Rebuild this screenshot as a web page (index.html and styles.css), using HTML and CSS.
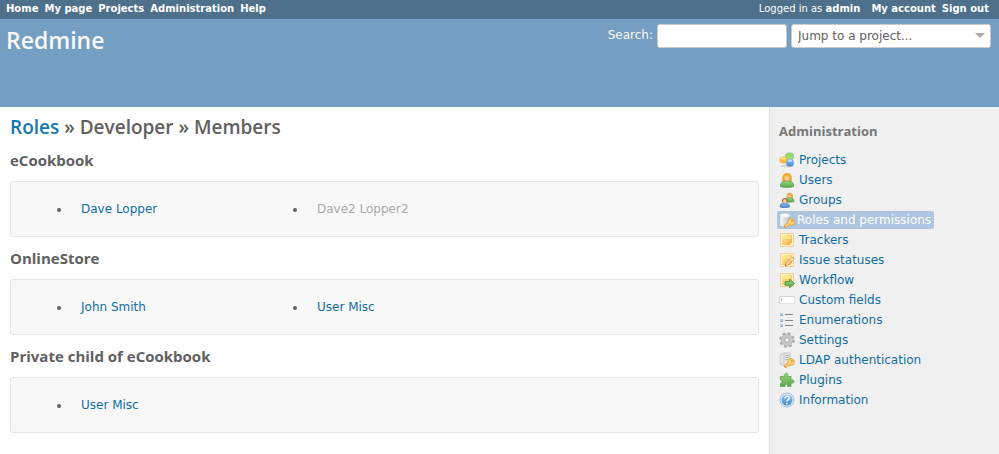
FILE: index.html
```html
<!DOCTYPE html>
<html lang="en">
<head>
<meta charset="utf-8">
<title>Members - Redmine</title>
<link rel="stylesheet" href="styles.css">
</head>
<body>
<svg class="defs" aria-hidden="true">
  <defs>
    <linearGradient id="gold" x1="0" y1="0" x2="1" y2="1"><stop offset="0" stop-color="#fff0ac"/><stop offset="1" stop-color="#f0aa38"/></linearGradient>
    <linearGradient id="green" x1="0" y1="0" x2="0" y2="1"><stop offset="0" stop-color="#9bd77c"/><stop offset="1" stop-color="#55a64b"/></linearGradient>
    <linearGradient id="blue" x1="0" y1="0" x2="0" y2="1"><stop offset="0" stop-color="#8fc4f2"/><stop offset="1" stop-color="#4388ce"/></linearGradient>
    <linearGradient id="grey" x1="0" y1="0" x2="1" y2="0"><stop offset="0" stop-color="#fafafa"/><stop offset="1" stop-color="#b8b8b8"/></linearGradient>
    <g id="note"><path d="M1.500 1.500h13v13h-13z" fill="#fff3ca" stroke="#f3cf94"/><path d="M3 3h10v7.500L10.500 13H3z" fill="url(#gold)"/><path d="M4 4h8v3H4z" fill="#ffe68a"/><path d="M10 13v-2.500h3z" fill="#fff1c4" stroke="#e2a850" stroke-width=".6"/></g>
    <g id="key"><path d="M10.800 10.500 6.500 14.300" stroke="#d99436" stroke-width="3" stroke-linecap="round"/><circle cx="12" cy="10" r="3.400" fill="#ffd46c" stroke="#dc9c3c" stroke-width=".8"/><path d="M11.500 10 6.600 14.300" stroke="#ffd777" stroke-width="1.600"/><circle cx="13" cy="9" r=".8" fill="#b57b32"/></g>
    <g id="person"><path d="M1.500 14.500c-.4-4 2-5.500 6.500-5.500s6.900 1.500 6.500 5.500c-3 1.200-10 1.200-13 0z"/><circle cx="8" cy="6.300" r="2.700" fill="#fbd1a0" stroke="#d08c4c" stroke-width=".5"/></g>
  </defs>
</svg>

<nav class="top-menu" aria-label="Top">
  <ul class="menu">
    <li><a href="#">Home</a></li>
    <li><a href="#">My page</a></li>
    <li><a href="#">Projects</a></li>
    <li><a href="#">Administration</a></li>
    <li><a href="#">Help</a></li>
  </ul>
  <div class="account">
    <span class="logged-as">Logged in as <a href="#">admin</a></span>
    <ul class="menu">
      <li><a href="#">My account</a></li>
      <li><a href="#">Sign out</a></li>
    </ul>
  </div>
</nav>

<header class="header">
  <h1>Redmine</h1>
  <form class="quick-search">
    <label for="q">Search:</label>
    <input id="q" name="q" type="text">
    <span class="jump">
      <select aria-label="Jump to a project"><option>Jump to a project...</option></select>
    </span>
  </form>
</header>

<div class="main">
  <main class="content">
    <h2><a href="#">Roles</a> » Developer » Members</h2>

    <h3>eCookbook</h3>
    <div class="box">
      <ul class="members">
        <li><a href="#">Dave Lopper</a></li>
        <li><a class="locked" href="#">Dave2 Lopper2</a></li>
      </ul>
    </div>

    <h3>OnlineStore</h3>
    <div class="box">
      <ul class="members">
        <li><a href="#">John Smith</a></li>
        <li><a href="#">User Misc</a></li>
      </ul>
    </div>

    <h3>Private child of eCookbook</h3>
    <div class="box">
      <ul class="members">
        <li><a href="#">User Misc</a></li>
      </ul>
    </div>
  </main>

  <aside class="sidebar">
    <h3>Administration</h3>
    <ul class="admin-menu">
      <li><a href="#"><svg viewBox="0 0 16 16"><ellipse cx="8" cy="14" rx="7" ry="1.500" fill="#d5d5d5"/><rect x="6.500" y="1" width="8" height="7" rx="3" fill="#9bdc70" stroke="#76bd55" stroke-width=".6"/><ellipse cx="4.500" cy="8" rx="4.200" ry="3.500" fill="#f6b743"/><ellipse cx="4.500" cy="6.500" rx="2.800" ry="1.300" fill="#ffdd83"/><circle cx="11" cy="10.700" r="3.900" fill="url(#blue)"/><ellipse cx="11" cy="8.800" rx="2.300" ry="1.200" fill="#b8dcfa"/></svg>Projects</a></li>
      <li><a href="#"><svg viewBox="0 0 16 16"><path d="M3.500 9.500c-1-4 0-8.500 4.500-8.500s5.500 4.500 4.500 8.500z" fill="#f0a52e"/><use href="#person" fill="url(#green)" stroke="#559447" stroke-width=".7"/><path d="M4.500 6C5 2 11 2 11.500 6L8 4.500z" fill="#ffc34a"/></svg>Users</a></li>
      <li><a href="#"><svg viewBox="0 0 16 16"><g transform="translate(5.500 0) scale(.66)"><path d="M3.500 9.500c-1-4 0-8.500 4.500-8.500s5.500 4.500 4.500 8.500z" fill="#f0a52e"/><use href="#person" fill="url(#green)" stroke="#559447"/></g><g transform="translate(0 4.500) scale(.72)"><path d="M4 8c-1-8 9-8 8 0z" fill="#965d3b"/><use href="#person" fill="url(#blue)" stroke="#427aaf"/></g></svg>Groups</a></li>
      <li><a class="selected" href="#"><svg viewBox="0 0 16 16"><path d="M1 3.500c0-3 10-3 10 0v9c0 3-10 3-10 0z" fill="url(#grey)" stroke="#c4c4c4" stroke-width=".6"/><ellipse cx="6" cy="3.500" rx="4.700" ry="2" fill="#fafafa" stroke="#d4d4d4" stroke-width=".5"/><use href="#key"/></svg>Roles and permissions</a></li>
      <li><a href="#"><svg viewBox="0 0 16 16"><use href="#note"/></svg>Trackers</a></li>
      <li><a href="#"><svg viewBox="0 0 16 16"><use href="#note"/><path d="m6 14 1-3.500 6-5.700 2.200 2.200-6 5.800z" fill="#f9c88a" stroke="#c98f58" stroke-width=".7"/><path d="m12 5.900 2 2" stroke="#fff1d5" stroke-width="1.200"/><path d="m6 14 .5-1.500 1 1z" fill="#6c5848"/></svg>Issue statuses</a></li>
      <li><a href="#"><svg viewBox="0 0 16 16"><use href="#note"/><path d="M6 9.500h4.500V7l5 4.500-5 4.300v-2.500H6z" fill="url(#green)" stroke="#3f8d3b" stroke-width=".8"/></svg>Workflow</a></li>
      <li><a href="#"><svg viewBox="0 0 16 16"><path d="M.5 4.500h15v7H.5z" fill="#fff" stroke="#e4e4e4"/><path d="M.5 11.500v-7h15" fill="none" stroke="#d4d4d4"/><path d="M2.500 6v3.500" stroke="#b9b9b9"/></svg>Custom fields</a></li>
      <li><a href="#"><svg viewBox="0 0 16 16"><path d="M1 1h3v3H1zM1 7h3v3H1zM1 12h3v3H1z" fill="#a5cbed"/><path d="M2 3h2v1H2zM2 9h2v1H2zM2 14h2v1H2z" fill="#7fabd5"/><path d="M6 2.500h8M6 8.500h8M6 13.500h8" stroke="#858585" stroke-width="1.200"/></svg>Enumerations</a></li>
      <li><a href="#"><svg viewBox="0 0 16 16"><circle cx="8" cy="8" r="6.300" fill="none" stroke="#a7a7a7" stroke-width="3" stroke-dasharray="2.600 2.348"/><circle cx="8" cy="8" r="4.300" fill="none" stroke="#c7c7c7" stroke-width="3.600"/><circle cx="8" cy="8" r="5.700" fill="none" stroke="#acacac" stroke-width=".6"/><circle cx="8" cy="8" r="2.300" fill="#f0f0f0" stroke="#9a9a9a" stroke-width=".8"/></svg>Settings</a></li>
      <li><a href="#"><svg viewBox="0 0 16 16"><path d="M1 3 5 1h6v13H5l-4-2z" fill="#e6e6e6" stroke="#b5b5b5" stroke-width=".7"/><path d="M5 1v13" stroke="#cacaca"/><path d="M6.500 3.500h3M6.500 5.500h3M6.500 7.500h3" stroke="#a0a0a0" stroke-width=".8"/><use href="#key"/></svg>LDAP authentication</a></li>
      <li><a href="#"><svg viewBox="0 0 16 16"><path d="M1 4.500h4.500C4 1 9.500 0 9 3.300l-.4 1.200H12v3.600c3.500-1.700 4.500 4.200 0 2.800v3.600H8.600c1-3-3.400-3-2.600 0H1.500v-3.300c2 .5 2-3.700 0-3.200z" fill="url(#green)" stroke="#5fa657" stroke-width=".8"/></svg>Plugins</a></li>
      <li><a href="#"><svg viewBox="0 0 16 16"><circle cx="8" cy="8" r="7" fill="#e3effa" stroke="#8eafd0" stroke-width=".8"/><circle cx="8" cy="8" r="5.500" fill="url(#blue)"/><path d="M5.900 6.500c0-3.200 4.600-2.800 4.400-.2C10.200 7.800 8 7.800 8 9.500" fill="none" stroke="#fff" stroke-width="1.400"/><circle cx="8" cy="11.700" r=".9" fill="#fff"/></svg>Information</a></li>
    </ul>
  </aside>
</div>
</body>
</html>
```
FILE: styles.css
```css
* { box-sizing: border-box; }

body {
  display: flex;
  flex-direction: column;
  min-height: 100vh;
  margin: 0;
  background: #fff;
  color: #606060;
  font: 12px/16px "DejaVu Sans", Verdana, sans-serif;
}

a { color: #116da1; text-decoration: none; }
a:hover { text-decoration: underline; }
ul { margin: 0; padding: 0; }

h1, h2, h3 {
  margin: 0;
  font-family: "Open Sans", "Trebuchet MS", sans-serif;
}

.defs { position: absolute; width: 0; height: 0; }

/* Top bar */
.top-menu {
  display: flex;
  justify-content: space-between;
  padding: 0 10px 0 6px;
  background: #4e708b;
  color: #fff;
  font-size: 10px;
  line-height: 18px;
  border-bottom: 1px solid #4e708b;
}
.top-menu a { color: #fff; font-weight: bold; }
.menu { display: flex; gap: 6px; list-style: none; }
.account { display: flex; gap: 11px; }

/* Header */
.header {
  display: flex;
  justify-content: space-between;
  align-items: flex-start;
  min-height: 88px;
  padding: 5px 8px 0 6px;
  background: #749ec2;
  color: #f8f8f8;
}
.header h1 { font-size: 23px; font-weight: 600; line-height: 32px; }
.quick-search { display: flex; gap: 4px; }
.quick-search label { line-height: 22px; }
.quick-search input,
.quick-search select {
  height: 24px;
  border: 1px solid #ccc;
  border-radius: 3px;
  background: #fff;
  color: #606060;
  font: inherit;
}
.quick-search input { width: 130px; padding: 0 6px; }
.jump { position: relative; }
.jump select { width: 200px; padding: 0 20px 0 6px; appearance: none; }
.jump::after {
  content: "";
  position: absolute;
  top: 9px;
  right: 6px;
  border: 5px solid transparent;
  border-top-color: #aaa;
  border-bottom: 0;
  pointer-events: none;
}

/* Page */
.main { display: flex; flex: 1; }
.content { flex: 1; min-width: 0; padding: 6px 10px 10px; }
.content h2 { margin-bottom: 8px; font-size: 19px; font-weight: 600; line-height: 28px; }
.content h2 a { color: #1479ad; }
.content h3 { margin-bottom: 10px; font-size: 15px; line-height: 22px; }
.box {
  margin-bottom: 10px;
  padding: 19px 0;
  border: 1px solid #e4e4e4;
  border-radius: 3px;
  background: #f8f8f8;
}
.members {
  display: grid;
  grid-template-columns: repeat(auto-fill, 236px);
  padding-left: 60px;
}
.members li { padding-left: 10px; }
.members .locked { color: #aaa; }

/* Sidebar */
.sidebar {
  flex: none;
  width: 230px;
  padding: 13px 9px 0;
  border-left: 1px solid #ddd;
  background: #f0f0f0;
}
.sidebar h3 { margin-bottom: 8px; color: #777; font-size: 13px; line-height: 22px; }
.admin-menu { list-style: none; }
.admin-menu li { display: flex; height: 20px; align-items: center; }
.admin-menu a { display: flex; align-items: center; gap: 4px; }
.admin-menu svg { width: 16px; height: 16px; }
.admin-menu .selected {
  gap: 2px;
  margin-left: -2px;
  padding: 1px 3px 1px 2px;
  border-radius: 2px;
  background: #aec5df;
  color: #fff;
}
```
